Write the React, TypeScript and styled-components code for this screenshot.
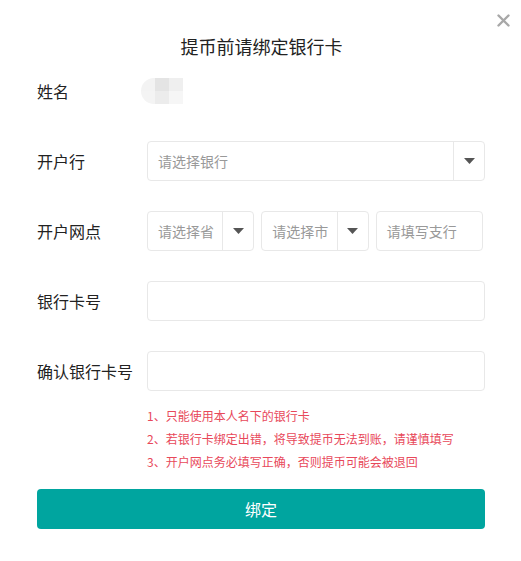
import React from "react";
import styled, { createGlobalStyle } from "styled-components";

const Global = createGlobalStyle`
  html, body { margin: 0; padding: 0; background: #fff; }
  body { font-family: "Noto Sans CJK SC", "Noto Sans", sans-serif; color: #333; }
  * { box-sizing: border-box; }
`;

const Dialog = styled.div`
  position: relative;
  width: 521px;
  height: 561px;
  background: #fff;
  padding: 34px 36px 0 37px;
`;

const Close = styled.button`
  position: absolute;
  top: 13px;
  right: 11px;
  width: 14px;
  height: 14px;
  padding: 0;
  border: none;
  background: transparent;
  display: flex;
  align-items: center;
  justify-content: center;
  cursor: pointer;
`;

const Title = styled.h2`
  margin: 0 0 13px;
  font-size: 18px;
  line-height: 24px;
  font-weight: 400;
  text-align: center;
  color: #222;
  padding-left: 1px;
`;

const Form = styled.div`
  display: flex;
  flex-direction: column;
  gap: 30px;
`;

const Row = styled.div`
  display: grid;
  grid-template-columns: 110px 1fr;
  align-items: center;
  height: 40px;
`;

const Label = styled.span`
  font-size: 16px;
  color: #222;
`;

const Blur = styled.div`
  margin-left: -6px;
  display: grid;
  grid-template-columns: repeat(3, 14px);
  grid-template-rows: repeat(2, 13px);
  width: 42px;
  border-radius: 13px 0 0 13px;
  overflow: hidden;
`;

const Cell = styled.div<{ $c: string }>`
  background: ${(p) => p.$c};
`;

const Box = styled.div`
  display: flex;
  align-items: stretch;
  height: 40px;
  border: 1px solid #e8e8e8;
  border-radius: 4px;
  background: #fff;
  flex: 1;
  min-width: 0;
`;

const Field = styled.div`
  flex: 1;
  display: flex;
  align-items: center;
  padding-left: 10px;
  font-size: 14px;
  color: #999;
  white-space: nowrap;
  overflow: hidden;
`;

const Caret = styled.div`
  width: 31px;
  border-left: 1px solid #e8e8e8;
  display: flex;
  align-items: center;
  justify-content: center;
`;

const Triple = styled.div`
  display: flex;
  gap: 7px;
  padding-right: 2px;
`;

const Notes = styled.ul`
  list-style: none;
  margin: 13px 0 0 110px;
  padding: 0;
`;

const Note = styled.li`
  font-size: 12px;
  line-height: 23px;
  color: #e8485a;
`;

const Submit = styled.button`
  margin-top: 16px;
  width: 100%;
  height: 40px;
  border: none;
  border-radius: 4px;
  background: #00a59f;
  color: #fff;
  font-family: inherit;
  font-size: 16px;
  cursor: pointer;
`;

const Arrow = () => (
  <svg width="11" height="6" viewBox="0 0 11 6">
    <path d="M0 0 H11 L5.5 6 Z" fill="#555" />
  </svg>
);

const Select = ({ text }: { text: string }) => (
  <Box>
    <Field>{text}</Field>
    <Caret>
      <Arrow />
    </Caret>
  </Box>
);

export default function App() {
  const cells = ["#f3f3f3", "#e4e4e4", "#efefef", "#f4f4f4", "#ececec", "#f6f6f6"];
  return (
    <>
      <Global />
      <Dialog>
        <Close aria-label="close">
          <svg width="13" height="13" viewBox="0 0 13 13">
            <path d="M1.5 1.5 L11.5 11.5 M11.5 1.5 L1.5 11.5" stroke="#a8a8a8" strokeWidth="2.4" strokeLinecap="round" />
          </svg>
        </Close>
        <Title>提币前请绑定银行卡</Title>
        <Form>
          <Row>
            <Label>姓名</Label>
            <Blur>
              {cells.map((c, i) => (
                <Cell key={i} $c={c} />
              ))}
            </Blur>
          </Row>
          <Row>
            <Label>开户行</Label>
            <Select text="请选择银行" />
          </Row>
          <Row>
            <Label>开户网点</Label>
            <Triple>
              <Select text="请选择省" />
              <Select text="请选择市" />
              <Box>
                <Field>请填写支行</Field>
              </Box>
            </Triple>
          </Row>
          <Row>
            <Label>银行卡号</Label>
            <Box />
          </Row>
          <Row>
            <Label>确认银行卡号</Label>
            <Box />
          </Row>
        </Form>
        <Notes>
          <Note>1、只能使用本人名下的银行卡</Note>
          <Note>2、若银行卡绑定出错，将导致提币无法到账，请谨慎填写</Note>
          <Note>3、开户网点务必填写正确，否则提币可能会被退回</Note>
        </Notes>
        <Submit>绑定</Submit>
      </Dialog>
    </>
  );
}
